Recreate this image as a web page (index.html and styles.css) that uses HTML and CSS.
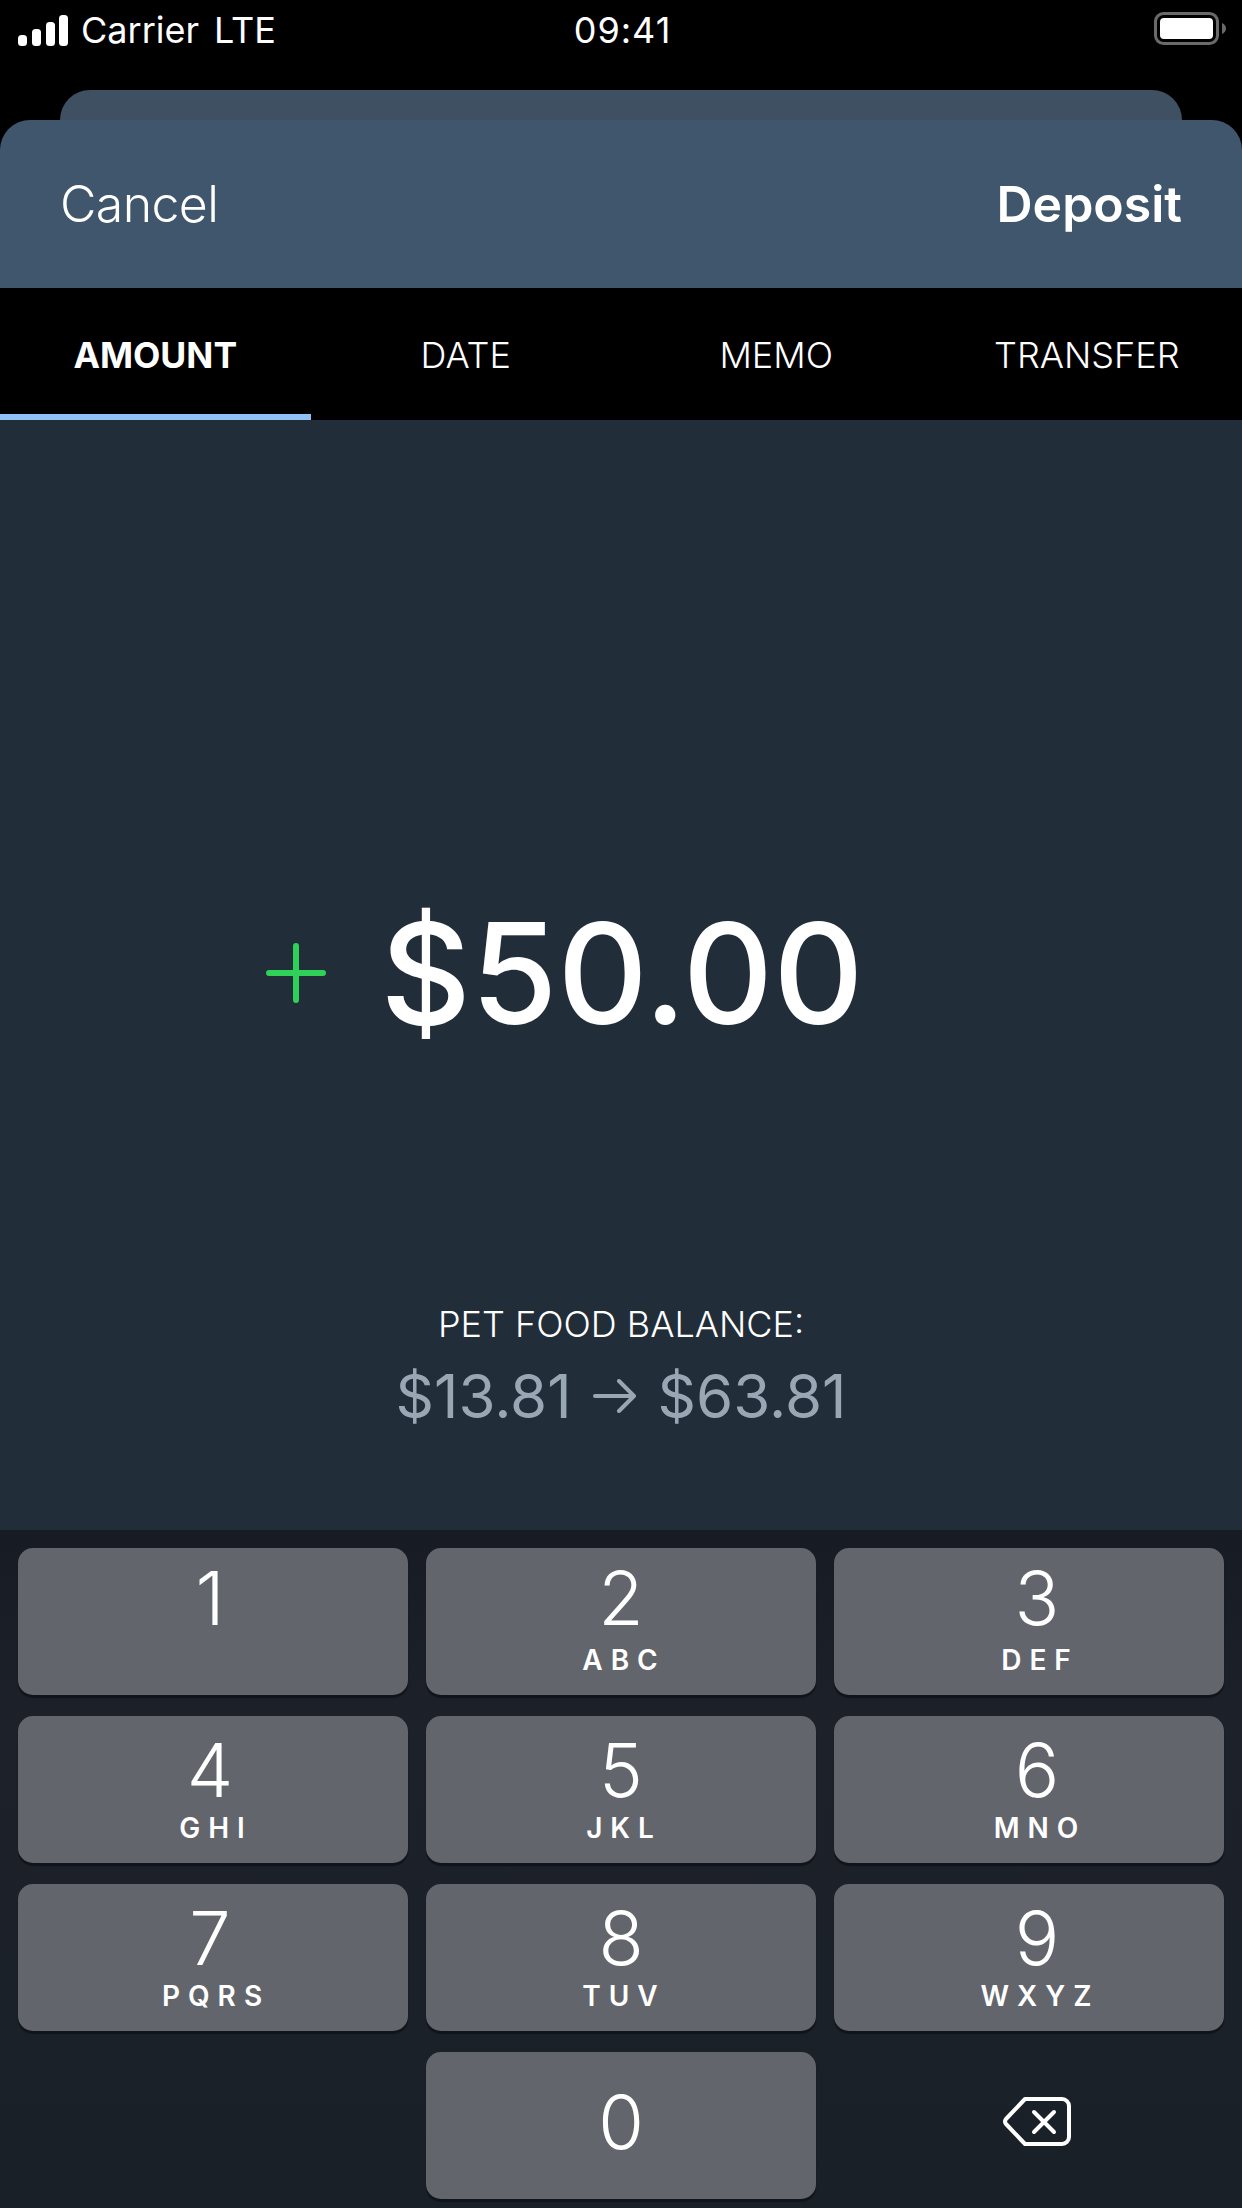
FILE: index.html
```html
<!DOCTYPE html>
<html lang="en">
<head>
    <meta charset="UTF-8">
    <meta name="viewport" content="width=device-width, initial-scale=1.0">
    <title>Deposit</title>
    <link rel="stylesheet" href="styles.css">
</head>
<body>
    <div class="status-bar">
        <div class="status-left">
            <svg class="signal" width="50" height="31" viewBox="0 0 50 31">
                <rect x="0" y="20" width="9" height="11" rx="3.500" fill="#fff"/>
                <rect x="14" y="14" width="9" height="17" rx="3.500" fill="#fff"/>
                <rect x="28" y="7" width="9" height="24" rx="3.500" fill="#fff"/>
                <rect x="41" y="0" width="9" height="31" rx="3.500" fill="#fff"/>
            </svg>
            <span class="carrier">Carrier</span>
            <span>LTE</span>
        </div>
        <div class="status-time">09:41</div>
        <div class="status-right">
            <svg class="battery" width="73" height="33" viewBox="0 0 73 33">
                <rect x="1.500" y="1.500" width="62" height="30" rx="8" fill="none" stroke="#6a6a6a" stroke-width="3"/>
                <rect x="6" y="6" width="53" height="21" rx="4" fill="#fff"/>
                <path d="M68 11c2.500 1 4 3 4 5.500s-1.500 4.500-4 5.500z" fill="#6a6a6a"/>
            </svg>
        </div>
    </div>

    <div class="card-behind"></div>
    <div class="sheet-header">
        <span class="cancel">Cancel</span>
        <span class="deposit">Deposit</span>
    </div>

    <div class="tabs">
        <div class="tab active">AMOUNT</div>
        <div class="tab">DATE</div>
        <div class="tab">MEMO</div>
        <div class="tab">TRANSFER</div>
    </div>

    <div class="main">
        <div class="amount-row">
            <svg class="plus" width="60" height="60" viewBox="0 0 60 60">
                <path d="M30 3v54M3 30h54" stroke="#30d158" stroke-width="6" stroke-linecap="round" fill="none"/>
            </svg>
            <div class="amount">$50.00</div>
        </div>
        <div class="balance">
            <div class="balance-label">PET FOOD BALANCE:</div>
            <div class="balance-values">
                <span>$13.81</span>
                <svg class="arrow" width="44" height="34" viewBox="0 0 44 34">
                    <path d="M2 17h39M26 2l15 15-15 15" stroke="#99a6b3" stroke-width="4" stroke-linecap="round" stroke-linejoin="round" fill="none"/>
                </svg>
                <span>$63.81</span>
            </div>
        </div>
    </div>

    <div class="keypad">
        <div class="key first-row left-col"><span class="digit">1</span></div>
        <div class="key first-row"><span class="digit">2</span><span class="letters">ABC</span></div>
        <div class="key first-row right-col"><span class="digit">3</span><span class="letters">DEF</span></div>
        <div class="key left-col"><span class="digit">4</span><span class="letters">GHI</span></div>
        <div class="key"><span class="digit">5</span><span class="letters">JKL</span></div>
        <div class="key right-col"><span class="digit">6</span><span class="letters">MNO</span></div>
        <div class="key left-col"><span class="digit">7</span><span class="letters">PQRS</span></div>
        <div class="key"><span class="digit">8</span><span class="letters">TUV</span></div>
        <div class="key right-col"><span class="digit">9</span><span class="letters">WXYZ</span></div>
        <div class="key-empty"></div>
        <div class="key key-zero"><span class="digit">0</span></div>
        <div class="key-delete">
            <svg width="68" height="49" viewBox="0 0 68 49">
                <path d="M22 2h37a7 7 0 0 1 7 7v31a7 7 0 0 1-7 7H22L3 27a4 4 0 0 1 0-5z" stroke="#fff" stroke-width="4" stroke-linejoin="round" fill="none"/>
                <path d="M31 15l20 20M51 15L31 35" stroke="#fff" stroke-width="4" stroke-linecap="round" fill="none"/>
            </svg>
        </div>
    </div>
</body>
</html>
```

FILE: styles.css
```css
body {
    margin: 0;
    width: 1242px;
    height: 2208px;
    overflow: hidden;
    background-color: #000;
    color: #fff;
    font-family: Inter, "Liberation Sans", sans-serif;
}
.status-bar {
    height: 90px;
    box-sizing: border-box;
    padding: 10px 15px 0 18px;
    display: grid;
    grid-template-columns: 1fr auto 1fr;
    align-items: start;
    font-size: 36px;
    line-height: 40px;
}
.status-left {
    display: flex;
    align-items: center;
    gap: 14px;
}
.carrier {
    margin: 0 1px 0 -1px;
}
.status-time {
    letter-spacing: 1px;
}
.status-right {
    display: flex;
    justify-content: flex-end;
    padding-top: 2px;
}
.card-behind {
    height: 30px;
    margin: 0 60px;
    background-color: #3f5062;
    border-radius: 30px 30px 0 0;
}
.sheet-header {
    height: 168px;
    box-sizing: border-box;
    padding: 0 60px;
    display: flex;
    justify-content: space-between;
    align-items: center;
    background-color: #40566c;
    border-radius: 30px 30px 0 0;
}
.cancel {
    font-size: 50px;
    font-weight: 350;
    letter-spacing: -0.600px;
}
.deposit {
    font-size: 50px;
    font-weight: 600;
}
.tabs {
    height: 132px;
    display: flex;
}
.tab {
    flex: 1;
    box-sizing: border-box;
    padding-top: 8px;
    border-bottom: 6px solid transparent;
    display: flex;
    justify-content: center;
    align-items: center;
    font-size: 36px;
    font-weight: 300;
}
.tab.active {
    border-bottom-color: #90c1f5;
    font-size: 35.500px;
    font-weight: 700;
}
.main {
    height: 1110px;
    box-sizing: border-box;
    padding-top: 481px;
    background-color: #212d39;
}
.amount-row {
    display: flex;
    justify-content: center;
    align-items: center;
    gap: 54px;
    height: 144px;
    padding-right: 112px;
}
.amount {
    font-size: 140px;
    line-height: 144px;
    font-weight: 500;
}
.balance {
    margin-top: 259px;
    text-align: center;
}
.balance-label {
    font-size: 36px;
    line-height: 40px;
    font-weight: 300;
}
.balance-values {
    margin-top: 16px;
    display: flex;
    justify-content: center;
    align-items: center;
    gap: 21px;
    font-size: 60px;
    line-height: 72px;
    color: #99a6b3;
}
.keypad {
    height: 678px;
    box-sizing: border-box;
    padding: 18px 18px 0;
    display: grid;
    grid-template-columns: repeat(3, 390px);
    grid-template-rows: repeat(4, 147px);
    column-gap: 18px;
    row-gap: 21px;
    background: linear-gradient(#171c24, #1c212a 30%, #1a2028);
}
.key {
    display: flex;
    flex-direction: column;
    align-items: center;
    background-color: #62656c;
    border-radius: 15px;
    box-shadow: 0 3px 1px #11141a;
}
.right-col {
    box-sizing: border-box;
    padding-left: 16px;
}
.left-col .digit {
    margin-right: 6px;
}
.digit {
    margin-top: 18px;
    font-size: 74px;
    line-height: 72px;
    font-weight: 350;
}
.letters {
    margin-top: 5px;
    padding-left: 6px;
    font-size: 28px;
    line-height: 34px;
    font-weight: 600;
    letter-spacing: 8px;
}
.first-row .digit {
    margin-top: 14px;
}
.first-row .letters {
    margin-top: 9px;
}
.key-zero .digit {
    margin-top: 34px;
}
.key-delete {
    display: flex;
    justify-content: center;
    align-items: center;
    padding: 0 0 8px 16px;
}
```
